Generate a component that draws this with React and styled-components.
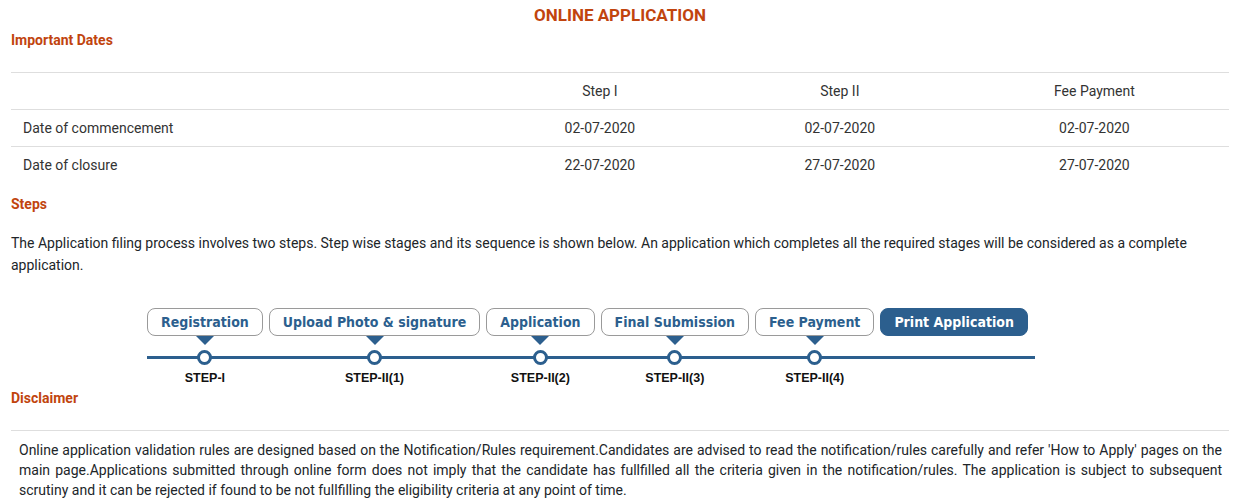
import React from "react";
import styled, { createGlobalStyle } from "styled-components";

const GlobalStyle = createGlobalStyle`
  * { box-sizing: border-box; }
  body {
    margin: 0;
    background: #fff;
    font-family: Roboto, "Liberation Sans", Arial, sans-serif;
    font-size: 14px;
    color: #212529;
  }
`;

const dates = [
  { label: "Date of commencement", values: ["02-07-2020", "02-07-2020", "02-07-2020"] },
  { label: "Date of closure", values: ["22-07-2020", "27-07-2020", "27-07-2020"] },
];

const stages = [
  { name: "Registration", step: "STEP-I" },
  { name: "Upload Photo & signature", step: "STEP-II(1)" },
  { name: "Application", step: "STEP-II(2)" },
  { name: "Final Submission", step: "STEP-II(3)" },
  { name: "Fee Payment", step: "STEP-II(4)" },
  { name: "Print Application", active: true },
];

const Page = styled.div`
  padding: 0 22px 0 11px;
`;

const Title = styled.h1`
  margin: 0;
  padding-top: 5px;
  text-align: center;
  font-size: 17px;
  font-weight: 700;
  color: #c1440e;
  line-height: 20px;
`;

const SectionHead = styled.h2`
  margin: ${(p) => p.$mt || 0}px 0 0;
  font-size: 14px;
  font-weight: 700;
  color: #c1440e;
  line-height: 20px;
`;

const Table = styled.table`
  width: 100%;
  margin-top: 22px;
  border-collapse: collapse;
  table-layout: fixed;
  color: #333;

  th, td {
    height: 37px;
    padding: 0 12px;
    font-weight: 400;
    border-top: 1px solid #dedede;
    text-align: center;
    vertical-align: middle;
  }
  td:first-child { text-align: left; }
`;

const Text = styled.p`
  margin: 18px 0 0;
  line-height: 22px;
  color: #212529;
`;

const Timeline = styled.div`
  position: relative;
  display: flex;
  gap: 6px;
  width: max-content;
  margin: 32px 0 0 136px;
  padding-right: 7px;

  &::before {
    content: "";
    position: absolute;
    left: 0;
    right: 0;
    top: 48px;
    height: 3px;
    background: #2c5f8e;
  }
`;

const Stage = styled.div`
  display: flex;
  flex-direction: column;
  align-items: center;
`;

const StageButton = styled.div`
  height: 28px;
  padding: 0 13px;
  display: flex;
  align-items: center;
  border: 1px solid ${(p) => (p.$active ? "#2c5f8e" : "#9a9a9a")};
  border-radius: 8px;
  background: ${(p) => (p.$active ? "#2c5f8e" : "#fff")};
  color: ${(p) => (p.$active ? "#fff" : "#2c5f8e")};
  font-family: "DejaVu Sans Condensed", "DejaVu Sans", sans-serif;
  font-weight: 700;
  font-size: 14px;
  white-space: nowrap;
`;

const Arrow = styled.div`
  width: 0;
  height: 0;
  border-left: 9px solid transparent;
  border-right: 9px solid transparent;
  border-top: 9px solid #2c5f8e;
`;

const Node = styled.div`
  position: relative;
  width: 15px;
  height: 15px;
  margin-top: 5px;
  border: 3px solid #2c5f8e;
  border-radius: 50%;
  background: #fff;
`;

const StepLabel = styled.div`
  margin-top: 6px;
  font-family: "Liberation Sans", Arial, sans-serif;
  font-weight: 700;
  font-size: 12.5px;
  color: #111;
`;

const Divider = styled.hr`
  margin: 22px 0 0;
  border: 0;
  border-top: 1px solid #dedede;
`;

const Disclaimer = styled.p`
  margin: 9px 7px 0 8px;
  line-height: 20px;
  text-align: justify;
  color: #212529;
`;

export default function App() {
  return (
    <>
      <GlobalStyle />
      <Page>
        <Title>ONLINE APPLICATION</Title>
        <SectionHead $mt={5}>Important Dates</SectionHead>
        <Table>
          <colgroup>
            <col style={{ width: "38.5%" }} />
            <col style={{ width: "19.7%" }} />
            <col style={{ width: "19.7%" }} />
            <col />
          </colgroup>
          <thead>
            <tr>
              <th></th>
              <th>Step I</th>
              <th>Step II</th>
              <th>Fee Payment</th>
            </tr>
          </thead>
          <tbody>
            {dates.map((d) => (
              <tr key={d.label}>
                <td>{d.label}</td>
                {d.values.map((v, i) => (
                  <td key={i}>{v}</td>
                ))}
              </tr>
            ))}
          </tbody>
        </Table>
        <SectionHead $mt={10}>Steps</SectionHead>
        <Text>
          The Application filing process involves two steps. Step wise stages and its sequence is shown below. An
          application which completes all the required stages will be considered as a complete application.
        </Text>
        <Timeline>
          {stages.map((s) => (
            <Stage key={s.name}>
              <StageButton $active={s.active}>{s.name}</StageButton>
              {!s.active && (
                <>
                  <Arrow />
                  <Node />
                  <StepLabel>{s.step}</StepLabel>
                </>
              )}
            </Stage>
          ))}
        </Timeline>
        <SectionHead $mt={3}>Disclaimer</SectionHead>
        <Divider />
        <Disclaimer>
          Online application validation rules are designed based on the Notification/Rules requirement.Candidates are
          advised to read the notification/rules carefully and refer 'How to Apply' pages on the main page.Applications
          submitted through online form does not imply that the candidate has fullfilled all the criteria given in the
          notification/rules. The application is subject to subsequent scrutiny and it can be rejected if found to be
          not fullfilling the eligibility criteria at any point of time.
        </Disclaimer>
      </Page>
    </>
  );
}
